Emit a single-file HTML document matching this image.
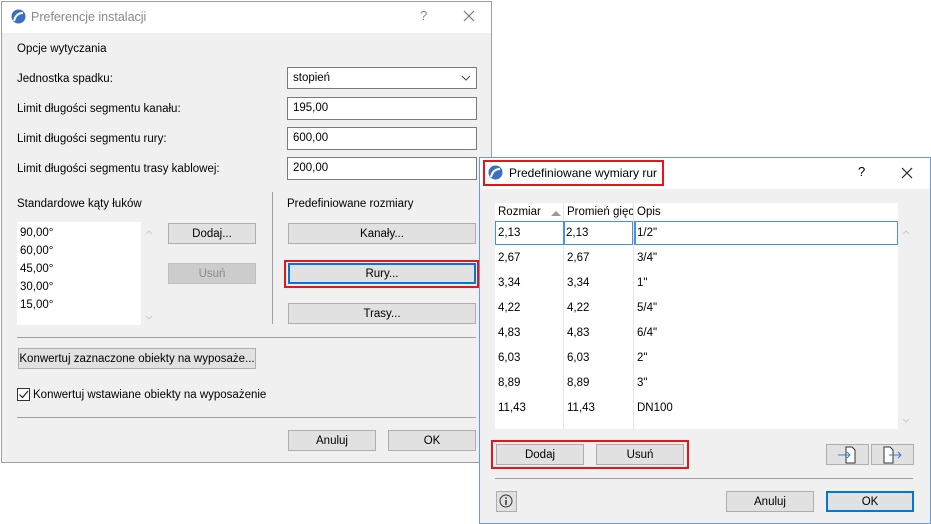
<!DOCTYPE html>
<html><head><style>
*{box-sizing:border-box;margin:0;padding:0}
body{width:931px;height:524px;background:#fff;position:relative;overflow:hidden;font-family:"Liberation Sans",sans-serif;font-size:11.5px;color:#000}
.a{position:absolute}
.dlg{position:absolute;background:#f0f0f0;border:1px solid #a0a0a0}
.tb{position:absolute;left:0;right:0;top:0;height:31px;background:#fff}
.in{position:absolute;background:#fff;border:1px solid #7a7a7a;padding-left:5px;line-height:21px}
.btn{position:absolute;background:#e1e1e1;border:1px solid #adadad;text-align:center;line-height:20px;height:21px}
.t{position:absolute;white-space:nowrap;line-height:14px}
.hl{position:absolute;height:1px;background:#a0a0a0}
.red{position:absolute;border:2px solid #e8141b}
.row{position:absolute;left:0;width:403px;height:25px}
.c{position:absolute;line-height:25px;padding-left:2px}
</style></head><body>

<!-- left dialog -->
<div class="dlg" style="left:1px;top:1px;width:491px;height:462px">
 <div class="tb"></div>
</div>
<svg class="a" style="left:11px;top:9px" width="15" height="15" viewBox="0 0 15 15"><circle cx="7.5" cy="7.5" r="7" fill="#3a6fc4"/><path d="M3 12 Q5 4 12 4" stroke="#fff" stroke-width="2" fill="none"/></svg>
<div class="t" style="left:31px;top:10px;color:#888;font-size:12.5px">Preferencje instalacji</div>
<div class="t" style="left:420px;top:9px;color:#888;font-size:13px">?</div>
<svg class="a" style="left:463px;top:10px" width="12" height="12"><path d="M1 1L11 11M11 1L1 11" stroke="#777" stroke-width="1.2"/></svg>

<div class="t" style="left:17px;top:42px">Opcje wytyczania</div>
<div class="t" style="left:17px;top:72px">Jednostka spadku:</div>
<div class="t" style="left:17px;top:102px">Limit długości segmentu kanału:</div>
<div class="t" style="left:17px;top:132px">Limit długości segmentu rury:</div>
<div class="t" style="left:17px;top:162px">Limit długości segmentu trasy kablowej:</div>
<div class="in" style="left:287px;top:67px;width:190px;height:22px">stopień</div>
<svg class="a" style="left:461px;top:74px" width="10" height="8"><path d="M1 2L5 6L9 2" stroke="#444" fill="none"/></svg>
<div class="in" style="left:287px;top:97px;width:190px;height:23px">195,00</div>
<div class="in" style="left:287px;top:127px;width:190px;height:23px">600,00</div>
<div class="in" style="left:287px;top:157px;width:190px;height:23px">200,00</div>

<div class="t" style="left:17px;top:197px">Standardowe kąty łuków</div>
<div class="a" style="left:17px;top:222px;width:124px;height:103px;background:#fff"></div>
<div class="t" style="left:20px;top:224px;line-height:18px">90,00°<br>60,00°<br>45,00°<br>30,00°<br>15,00°</div>
<svg class="a" style="left:144px;top:228px" width="10" height="100"><path d="M2 6L5 3L8 6M2 88L5 91L8 88" stroke="#ccc" fill="none"/></svg>
<div class="btn" style="left:168px;top:223px;width:88px">Dodaj...</div>
<div class="btn" style="left:168px;top:263px;width:88px;background:#ccc;border-color:#bfbfbf;color:#8a8a8a">Usuń</div>
<div class="a" style="left:272px;top:192px;width:1px;height:132px;background:#a0a0a0"></div>
<div class="t" style="left:287px;top:197px">Predefiniowane rozmiary</div>
<div class="btn" style="left:288px;top:223px;width:188px">Kanały...</div>
<div class="red" style="left:284px;top:260px;width:195px;height:28px"></div>
<div class="btn" style="left:288px;top:263px;width:188px;border:2px solid #0078d7;line-height:18px">Rury...</div>
<div class="btn" style="left:288px;top:303px;width:188px">Trasy...</div>
<div class="hl" style="left:17px;top:337px;width:459px"></div>
<div class="btn" style="left:18px;top:348px;width:238px">Konwertuj zaznaczone obiekty na wyposaże...</div>
<div class="a" style="left:17px;top:388px;width:13px;height:13px;border:1px solid #333;background:#fff"></div>
<svg class="a" style="left:18px;top:389px" width="11" height="11"><path d="M1.5 5.5L4.5 8.5L10 2" stroke="#222" fill="none" stroke-width="1.2"/></svg>
<div class="t" style="left:33px;top:388px">Konwertuj wstawiane obiekty na wyposażenie</div>
<div class="hl" style="left:17px;top:417px;width:459px"></div>
<div class="btn" style="left:288px;top:430px;width:88px">Anuluj</div>
<div class="btn" style="left:388px;top:430px;width:88px">OK</div>

<!-- right dialog -->
<div class="dlg" style="left:479px;top:157px;width:452px;height:367px;border-color:#6a9ad8">
 <div class="tb"></div>
</div>
<div class="red" style="left:483px;top:160px;width:181px;height:26px"></div>
<svg class="a" style="left:488px;top:165px" width="15" height="15" viewBox="0 0 15 15"><circle cx="7.5" cy="7.5" r="7" fill="#3a6fc4"/><path d="M3 12 Q5 4 12 4" stroke="#fff" stroke-width="2" fill="none"/></svg>
<div class="t" style="left:509px;top:166px;font-size:12px">Predefiniowane wymiary rur</div>
<div class="t" style="left:858px;top:165px;font-size:13px">?</div>
<svg class="a" style="left:901px;top:167px" width="12" height="12"><path d="M1 1L11 11M11 1L1 11" stroke="#222" stroke-width="1.2"/></svg>

<div class="a" style="left:495px;top:203px;width:403px;height:226px;background:#fff;overflow:hidden">
 <div class="a" style="left:68px;top:0;width:1px;height:228px;background:#e6e6e6"></div>
 <div class="a" style="left:138px;top:0;width:1px;height:228px;background:#e6e6e6"></div>
 <div class="c" style="left:1px;top:-3px">Rozmiar</div>
 <svg class="a" style="left:56px;top:7px" width="10" height="6"><path d="M0 6L5 1L10 6Z" fill="#999"/></svg>
 <div class="c" style="left:70px;top:-3px;width:68px;overflow:hidden;white-space:nowrap">Promień gięcia</div>
 <div class="c" style="left:140px;top:-3px">Opis</div>
 <div class="row" style="top:18px">
  <div class="a" style="left:0;top:0;width:69px;height:24px;border:1px solid #4a90e2"></div>
  <div class="a" style="left:69px;top:0;width:69px;height:24px;border:1px solid #4a90e2"></div>
  <div class="a" style="left:139px;top:0;width:264px;height:24px;border:1px solid #4a90e2;border-left:2px solid #4a90e2"></div>
  <div class="c" style="left:1px">2,13</div><div class="c" style="left:69px">2,13</div><div class="c" style="left:140px">1/2"</div>
 </div>
 <div class="row" style="top:43px"><div class="c" style="left:1px">2,67</div><div class="c" style="left:70px">2,67</div><div class="c" style="left:140px">3/4"</div></div>
 <div class="row" style="top:68px"><div class="c" style="left:1px">3,34</div><div class="c" style="left:70px">3,34</div><div class="c" style="left:140px">1"</div></div>
 <div class="row" style="top:93px"><div class="c" style="left:1px">4,22</div><div class="c" style="left:70px">4,22</div><div class="c" style="left:140px">5/4"</div></div>
 <div class="row" style="top:118px"><div class="c" style="left:1px">4,83</div><div class="c" style="left:70px">4,83</div><div class="c" style="left:140px">6/4"</div></div>
 <div class="row" style="top:143px"><div class="c" style="left:1px">6,03</div><div class="c" style="left:70px">6,03</div><div class="c" style="left:140px">2"</div></div>
 <div class="row" style="top:168px"><div class="c" style="left:1px">8,89</div><div class="c" style="left:70px">8,89</div><div class="c" style="left:140px">3"</div></div>
 <div class="row" style="top:193px"><div class="c" style="left:1px">11,43</div><div class="c" style="left:70px">11,43</div><div class="c" style="left:140px">DN100</div></div>
 <div class="row" style="top:220px"><div class="c" style="left:1px">14,13</div><div class="c" style="left:70px">14,13</div><div class="c" style="left:140px">DN125</div></div>
</div>
<svg class="a" style="left:901px;top:226px" width="10" height="200"><path d="M2 8L5 5L8 8M2 193L5 196L8 193" stroke="#ccc" fill="none"/></svg>

<div class="red" style="left:491px;top:440px;width:198px;height:29px"></div>
<div class="btn" style="left:496px;top:444px;width:88px">Dodaj</div>
<div class="btn" style="left:596px;top:444px;width:88px">Usuń</div>
<div class="btn" style="left:826px;top:444px;width:43px"></div>
<div class="btn" style="left:871px;top:444px;width:43px"></div>
<svg class="a" style="left:836px;top:446px" width="24" height="18"><path d="M10 1H16L19 4V17H10Z" fill="#fff" stroke="#333"/><path d="M2 9H14M11 6L14 9L11 12" stroke="#3a7bd5" fill="none"/></svg>
<svg class="a" style="left:881px;top:446px" width="24" height="18"><path d="M3 1H9L12 4V17H3Z" fill="#fff" stroke="#333"/><path d="M8 9H20M17 6L20 9L17 12" stroke="#3a7bd5" fill="none"/></svg>
<div class="hl" style="left:495px;top:478px;width:418px"></div>
<div class="btn" style="left:496px;top:491px;width:21px"></div>
<svg class="a" style="left:499px;top:494px" width="14" height="14"><circle cx="7" cy="7" r="6" fill="none" stroke="#333"/><path d="M7 6V11" stroke="#333" stroke-width="1.5"/><circle cx="7" cy="4" r="0.9" fill="#333"/></svg>
<div class="btn" style="left:726px;top:491px;width:88px">Anuluj</div>
<div class="btn" style="left:826px;top:491px;width:88px;border:2px solid #0078d7;line-height:18px">OK</div>
</body></html>
